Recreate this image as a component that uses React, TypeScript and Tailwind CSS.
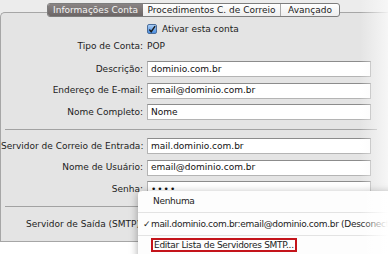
const Row = ({ label, value, secure }: { label: string; value: string; secure?: boolean }) => (
  <div className="flex h-[16px] items-center">
    <div className="w-[142px] whitespace-nowrap text-right">{label}</div>
    <div className="ml-[4px] flex h-[16px] w-[224px] items-center border border-[#b4b4b4] border-t-[#8c8c8c] bg-white pl-[3px] text-[#111]">
      {secure ? <span className="tracking-[1px]">••••</span> : value}
    </div>
  </div>
);

const App = () => {
  return (
    <div className="relative h-[254px] w-[388px] overflow-hidden bg-white font-['DejaVu_Sans',sans-serif] text-[9px] leading-none text-[#1c1c1c]">
      <div className="h-[242px] bg-[#ececec] pt-[3px]">
        {/* tabs */}
        <div className="relative z-10 ml-[47px] flex h-[14px] w-[293px] overflow-hidden rounded-[3px] border border-[#7d7d7d] bg-gradient-to-b from-white to-[#eeeeee]">
          <div className="flex w-[95px] items-center justify-center bg-gradient-to-b from-[#8a8484] to-[#6c6666] text-[#f4f4f4]">
            Informações Conta
          </div>
          <div className="flex w-[138px] items-center justify-center border-r border-[#a8a8a8]">
            Procedimentos C. de Correio
          </div>
          <div className="flex flex-1 items-center justify-center">Avançado</div>
        </div>

        {/* panel */}
        <div className="-mt-[5px] h-[230px] rounded-tl-[5px] border-t border-b border-l border-[#a6a6a6] bg-[#e4e4e4]">
          <div className="mt-[8px] flex h-[16px] items-center pl-[146px]">
            <div className="flex h-[10px] w-[10px] items-center justify-center rounded-[2px] border border-[#4b6e9c] bg-gradient-to-b from-[#a9cdf5] to-[#4b8ee0]">
              <svg width="9" height="9" viewBox="0 0 9 9">
                <path d="M1.5 4.5 L3.6 7 L8 0.8" fill="none" stroke="#1b1b1b" strokeWidth="1.6" />
              </svg>
            </div>
            <span className="ml-[5px]">Ativar esta conta</span>
          </div>
          <div className="mt-[1px] flex h-[16px] items-center">
            <div className="w-[142px] text-right">Tipo de Conta:</div>
            <div className="ml-[4px]">POP</div>
          </div>
          <div className="mt-[7px] flex flex-col gap-[5.5px]">
            <Row label="Descrição:" value="dominio.com.br" />
            <Row label="Endereço de E-mail:" value="email@dominio.com.br" />
            <Row label="Nome Completo:" value="Nome" />
          </div>
          <div className="ml-[4px] mt-[9px] h-px w-[372px] bg-[#a2a2a2]" />
          <div className="mt-[8px] flex flex-col gap-[5.5px]">
            <Row label="Servidor de Correio de Entrada:" value="mail.dominio.com.br" />
            <Row label="Nome de Usuário:" value="email@dominio.com.br" />
            <Row label="Senha:" value="" secure />
          </div>
          <div className="ml-[4px] mt-[9px] h-px w-[372px] bg-[#a2a2a2]" />
          <div className="mt-[9px] flex h-[16px] items-center">
            <div className="w-[142px] whitespace-nowrap text-right">Servidor de Saída (SMTP):</div>
          </div>
        </div>
      </div>

      {/* right edge fade */}
      <div className="pointer-events-none absolute right-0 top-0 h-[242px] w-[28px] bg-gradient-to-r from-transparent to-[#f8f8f8]/90" />

      {/* popup menu */}
      <div className="absolute left-[138px] top-[191px] h-[80px] w-[270px] overflow-hidden rounded-tl-[4px] bg-[#fdfdfd] tracking-[-0.3px] shadow-[0_2px_8px_rgba(0,0,0,0.35)]">
        <div className="flex h-[21px] items-center pl-[15px]">Nenhuma</div>
        <div className="h-px bg-[#e3e3e3]" />
        <div className="flex h-[22px] items-center whitespace-nowrap">
          <span className="w-[15px] pl-[5px]">✓</span>
          mail.dominio.com.br:email@dominio.com.br (Desconectado)
        </div>
        <div className="h-px bg-[#e3e3e3]" />
        <div className="ml-[13px] mt-[2px] inline-flex h-[14px] items-center border-2 border-[#c4141b] px-[1px]">
          Editar Lista de Servidores SMTP...
        </div>
      </div>
      <div className="pointer-events-none absolute right-0 top-[191px] h-[63px] w-[28px] bg-gradient-to-r from-transparent to-white" />
    </div>
  );
};

export default App;
